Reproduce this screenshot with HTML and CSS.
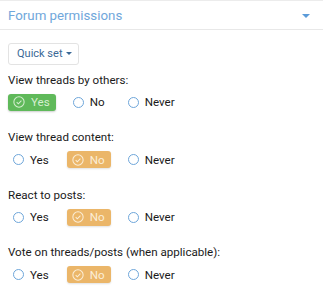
FILE: index.html
```html
<!DOCTYPE html>
<html lang="en">
<head>
    <meta charset="UTF-8">
    <meta name="viewport" content="width=device-width, initial-scale=1.0">
    <title>Forum permissions</title>
    <link rel="stylesheet" href="styles.css">
</head>
<body>
    <div class="block">
        <div class="block-header">
            <span class="block-title">Forum permissions</span>
            <span class="block-toggle"></span>
        </div>
        <div class="block-body">
            <div class="quick-set"><button class="btn-menu">Quick set <span class="caret"></span></button></div>

            <div class="perm">
                <div class="perm-label">View threads by others:</div>
                <div class="perm-choices">
                    <label class="choice is-yes"><span class="check"><svg viewBox="0 0 14 14"><circle cx="7" cy="7" r="6"/><path d="M4.3 7.2l1.9 1.9 3.6-3.7"/></svg></span>Yes</label>
                    <label class="choice"><span class="radio"></span>No</label>
                    <label class="choice"><span class="radio"></span>Never</label>
                </div>
            </div>

            <div class="perm">
                <div class="perm-label">View thread content:</div>
                <div class="perm-choices">
                    <label class="choice"><span class="radio"></span>Yes</label>
                    <label class="choice is-no"><span class="check"><svg viewBox="0 0 14 14"><circle cx="7" cy="7" r="6"/><path d="M4.3 7.2l1.9 1.9 3.6-3.7"/></svg></span>No</label>
                    <label class="choice"><span class="radio"></span>Never</label>
                </div>
            </div>

            <div class="perm">
                <div class="perm-label">React to posts:</div>
                <div class="perm-choices">
                    <label class="choice"><span class="radio"></span>Yes</label>
                    <label class="choice is-no"><span class="check"><svg viewBox="0 0 14 14"><circle cx="7" cy="7" r="6"/><path d="M4.3 7.2l1.9 1.9 3.6-3.7"/></svg></span>No</label>
                    <label class="choice"><span class="radio"></span>Never</label>
                </div>
            </div>

            <div class="perm">
                <div class="perm-label">Vote on threads/posts (when applicable):</div>
                <div class="perm-choices">
                    <label class="choice"><span class="radio"></span>Yes</label>
                    <label class="choice is-no"><span class="check"><svg viewBox="0 0 14 14"><circle cx="7" cy="7" r="6"/><path d="M4.3 7.2l1.9 1.9 3.6-3.7"/></svg></span>No</label>
                    <label class="choice"><span class="radio"></span>Never</label>
                </div>
            </div>
        </div>
    </div>
</body>
</html>
```

FILE: styles.css
```css
body, html {
    margin: 0;
    padding: 0;
    background-color: #fff;
    font-family: Roboto, "Liberation Sans", sans-serif;
    color: #1a1a1a;
}

.block {
    border-top: 1px solid #ececec;
}

.block-header {
    display: flex;
    align-items: center;
    justify-content: space-between;
    height: 28px;
    padding: 0 13px 0 8px;
    border-bottom: 1px solid #e8e8e8;
}

.block-title {
    font-size: 13.3px;
    color: #70a7db;
}

.block-toggle {
    width: 0;
    height: 0;
    border-left: 4px solid transparent;
    border-right: 4px solid transparent;
    border-top: 4px solid #5b9bd9;
    margin-top: 2px;
}

.block-body {
    padding: 12px 8px;
}

.btn-menu {
    display: inline-flex;
    align-items: center;
    gap: 4px;
    height: 22px;
    width: 71px;
    padding: 0 0 0 8px;
    font-family: inherit;
    font-size: 11px;
    color: #3a6896;
    background: #fff;
    border: 1px solid #e3e3e3;
    border-radius: 3px;
}

.caret {
    width: 0;
    height: 0;
    border-left: 3px solid transparent;
    border-right: 3px solid transparent;
    border-top: 3px solid #3a6896;
}

.perm {
    margin-top: 7px;
}

.perm + .perm {
    margin-top: 18.5px;
}

.perm-label {
    font-size: 11.6px;
    line-height: 16px;
}

.perm-choices {
    display: flex;
    align-items: center;
    gap: 12px;
    margin-top: 6px;
    height: 17px;
}

.choice {
    display: flex;
    align-items: center;
    gap: 6px;
    height: 17px;
    padding: 0 6px 0 5px;
    font-size: 11.6px;
    border-radius: 3px;
}

.radio {
    width: 9px;
    height: 9px;
    border: 1px solid #6ea6da;
    border-radius: 50%;
}

.check {
    display: flex;
}

.check svg {
    width: 12px;
    height: 12px;
    fill: none;
    stroke: currentColor;
    stroke-width: 1.2;
}

.is-yes {
    background: #5fb95a;
    color: #d6eed1;
    box-shadow: 0 1px 2px rgba(0, 0, 0, 0.2);
}

.is-no {
    background: #ebb669;
    color: #fbeed8;
    box-shadow: 0 1px 2px rgba(0, 0, 0, 0.12);
}
```
